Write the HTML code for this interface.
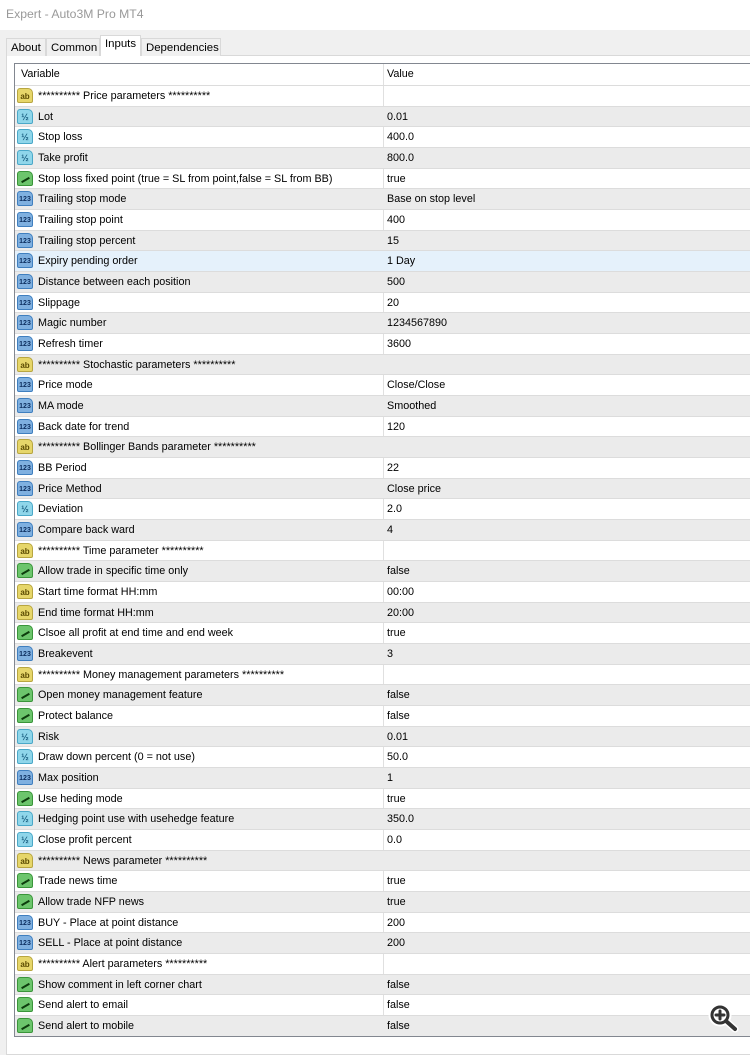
<!DOCTYPE html>
<html><head><meta charset="utf-8"><style>
*{margin:0;padding:0;box-sizing:border-box}
body{width:750px;height:1044px;overflow:hidden;background:#f0f0f0;font-family:"Liberation Sans",sans-serif;font-size:10.8px;color:#000;position:relative}
.title{position:absolute;left:0;top:0;width:750px;height:30px;background:#fff;color:#999;font-size:12.2px;padding:7px 0 0 6px}
.tab{position:absolute;top:38px;height:18px;border:1px solid #d9d9d9;border-bottom:none;background:#f0f0f0;padding:3px 0 0 4px;font-size:11.4px}
.tab.sel{top:35px;height:21px;background:#fff;border-color:#d9d9d9;z-index:2;padding-top:2px}
.panel{position:absolute;left:6px;top:55px;width:750px;height:1000px;background:#fff;border:1px solid #d9d9d9}
.tbl{position:absolute;left:14px;top:63px;width:740px;height:974px;border:1px solid #828790;background:#fff;overflow:hidden}
.hdr{position:absolute;left:0;top:0;width:740px;height:21px}
.hdr span{position:absolute;top:4px}
.vdiv{position:absolute;left:368px;top:0;width:1px;height:990px;background:#e0e0e0}
.row{position:absolute;left:0;width:740px;height:20.67px;border-top:1px solid #dcdcdc}
.row.g{background:#ebebeb}
.row.b{background:#e5f1fb}
.row .n{position:absolute;left:23px;top:4px;white-space:nowrap}
.row .v{position:absolute;left:372px;top:4px}
.ic{position:absolute;left:2px;top:2px;width:16px;height:15px;border-radius:3px 5px 2px 2px;font-size:8px;font-weight:bold;text-align:center;line-height:15px}
.ab{background:#e6d66a;border:1px solid #b8a640;color:#5a4a00}
.h{background:#8fd6ea;border:1px solid #4aa8c8;color:#1a5f80;font-size:9px}
.c{background:#6cc56c;border:1px solid #3a953a}
.n3{background:#7fb0e0;border:1px solid #3f7fbf;color:#0d2f60;font-size:7px}
.c::after{content:"";position:absolute;left:3px;top:7px;width:9px;height:2px;background:#0d3d0d;transform:rotate(-30deg)}
</style></head><body>
<div class="title">Expert - Auto3M Pro MT4</div>
<div class="panel"></div>
<div class="tab" style="left:6px;width:40px">About</div>
<div class="tab" style="left:46px;width:54px">Common</div>
<div class="tab sel" style="left:100px;width:41px">Inputs</div>
<div class="tab" style="left:141px;width:80px">Dependencies</div>
<div class="tbl">
<div class="hdr"><span style="left:6px">Variable</span><span style="left:372px">Value</span></div>
<div class="vdiv"></div>
<div class="row" style="top:21px"><div class="ic ab">ab</div><span class="n">********** Price parameters **********</span></div>
<div class="row g" style="top:41.67px"><div class="ic h">½</div><span class="n">Lot</span><span class="v">0.01</span></div>
<div class="row" style="top:62.33px"><div class="ic h">½</div><span class="n">Stop loss</span><span class="v">400.0</span></div>
<div class="row g" style="top:83px"><div class="ic h">½</div><span class="n">Take profit</span><span class="v">800.0</span></div>
<div class="row" style="top:103.67px"><div class="ic c"></div><span class="n">Stop loss fixed point (true = SL from point,false = SL from BB)</span><span class="v">true</span></div>
<div class="row g" style="top:124.33px"><div class="ic n3">123</div><span class="n">Trailing stop mode</span><span class="v">Base on stop level</span></div>
<div class="row" style="top:145px"><div class="ic n3">123</div><span class="n">Trailing stop point</span><span class="v">400</span></div>
<div class="row g" style="top:165.67px"><div class="ic n3">123</div><span class="n">Trailing stop percent</span><span class="v">15</span></div>
<div class="row b" style="top:186.33px"><div class="ic n3">123</div><span class="n">Expiry pending order</span><span class="v">1 Day</span></div>
<div class="row g" style="top:207px"><div class="ic n3">123</div><span class="n">Distance between each position</span><span class="v">500</span></div>
<div class="row" style="top:227.67px"><div class="ic n3">123</div><span class="n">Slippage</span><span class="v">20</span></div>
<div class="row g" style="top:248.33px"><div class="ic n3">123</div><span class="n">Magic number</span><span class="v">1234567890</span></div>
<div class="row" style="top:269px"><div class="ic n3">123</div><span class="n">Refresh timer</span><span class="v">3600</span></div>
<div class="row g" style="top:289.67px"><div class="ic ab">ab</div><span class="n">********** Stochastic parameters **********</span></div>
<div class="row" style="top:310.33px"><div class="ic n3">123</div><span class="n">Price mode</span><span class="v">Close/Close</span></div>
<div class="row g" style="top:331px"><div class="ic n3">123</div><span class="n">MA mode</span><span class="v">Smoothed</span></div>
<div class="row" style="top:351.67px"><div class="ic n3">123</div><span class="n">Back date for trend</span><span class="v">120</span></div>
<div class="row g" style="top:372.33px"><div class="ic ab">ab</div><span class="n">********** Bollinger Bands parameter **********</span></div>
<div class="row" style="top:393px"><div class="ic n3">123</div><span class="n">BB Period</span><span class="v">22</span></div>
<div class="row g" style="top:413.67px"><div class="ic n3">123</div><span class="n">Price Method</span><span class="v">Close price</span></div>
<div class="row" style="top:434.33px"><div class="ic h">½</div><span class="n">Deviation</span><span class="v">2.0</span></div>
<div class="row g" style="top:455px"><div class="ic n3">123</div><span class="n">Compare back ward</span><span class="v">4</span></div>
<div class="row" style="top:475.67px"><div class="ic ab">ab</div><span class="n">********** Time parameter **********</span></div>
<div class="row g" style="top:496.33px"><div class="ic c"></div><span class="n">Allow trade in specific time only</span><span class="v">false</span></div>
<div class="row" style="top:517px"><div class="ic ab">ab</div><span class="n">Start time format HH:mm</span><span class="v">00:00</span></div>
<div class="row g" style="top:537.67px"><div class="ic ab">ab</div><span class="n">End time format HH:mm</span><span class="v">20:00</span></div>
<div class="row" style="top:558.33px"><div class="ic c"></div><span class="n">Clsoe all profit at end time and end week</span><span class="v">true</span></div>
<div class="row g" style="top:579px"><div class="ic n3">123</div><span class="n">Breakevent</span><span class="v">3</span></div>
<div class="row" style="top:599.67px"><div class="ic ab">ab</div><span class="n">********** Money management parameters **********</span></div>
<div class="row g" style="top:620.33px"><div class="ic c"></div><span class="n">Open money management feature</span><span class="v">false</span></div>
<div class="row" style="top:641px"><div class="ic c"></div><span class="n">Protect balance</span><span class="v">false</span></div>
<div class="row g" style="top:661.67px"><div class="ic h">½</div><span class="n">Risk</span><span class="v">0.01</span></div>
<div class="row" style="top:682.33px"><div class="ic h">½</div><span class="n">Draw down percent (0 = not use)</span><span class="v">50.0</span></div>
<div class="row g" style="top:703px"><div class="ic n3">123</div><span class="n">Max position</span><span class="v">1</span></div>
<div class="row" style="top:723.67px"><div class="ic c"></div><span class="n">Use heding mode</span><span class="v">true</span></div>
<div class="row g" style="top:744.33px"><div class="ic h">½</div><span class="n">Hedging point use with usehedge feature</span><span class="v">350.0</span></div>
<div class="row" style="top:765px"><div class="ic h">½</div><span class="n">Close profit percent</span><span class="v">0.0</span></div>
<div class="row g" style="top:785.67px"><div class="ic ab">ab</div><span class="n">********** News parameter **********</span></div>
<div class="row" style="top:806.33px"><div class="ic c"></div><span class="n">Trade news time</span><span class="v">true</span></div>
<div class="row g" style="top:827px"><div class="ic c"></div><span class="n">Allow trade NFP news</span><span class="v">true</span></div>
<div class="row" style="top:847.67px"><div class="ic n3">123</div><span class="n">BUY - Place at point distance</span><span class="v">200</span></div>
<div class="row g" style="top:868.33px"><div class="ic n3">123</div><span class="n">SELL - Place at point distance</span><span class="v">200</span></div>
<div class="row" style="top:889px"><div class="ic ab">ab</div><span class="n">********** Alert parameters **********</span></div>
<div class="row g" style="top:909.67px"><div class="ic c"></div><span class="n">Show comment in left corner chart</span><span class="v">false</span></div>
<div class="row" style="top:930.33px"><div class="ic c"></div><span class="n">Send alert to email</span><span class="v">false</span></div>
<div class="row g" style="top:951px"><div class="ic c"></div><span class="n">Send alert to mobile</span><span class="v">false</span></div>
</div>
<svg style="position:absolute;left:706px;top:1001px" width="34" height="34" viewBox="0 0 34 34">
<g stroke="#fff" stroke-width="7" stroke-linecap="round" fill="none"><circle cx="14" cy="14" r="8"/><line x1="20" y1="20" x2="29" y2="28"/></g>
<g stroke="#333" stroke-width="3" stroke-linecap="round" fill="none"><circle cx="14" cy="14" r="8"/><line x1="20" y1="20" x2="29" y2="28" stroke-width="4"/><line x1="10" y1="14" x2="18" y2="14"/><line x1="14" y1="10" x2="14" y2="18"/></g>
</svg>
</body></html>
